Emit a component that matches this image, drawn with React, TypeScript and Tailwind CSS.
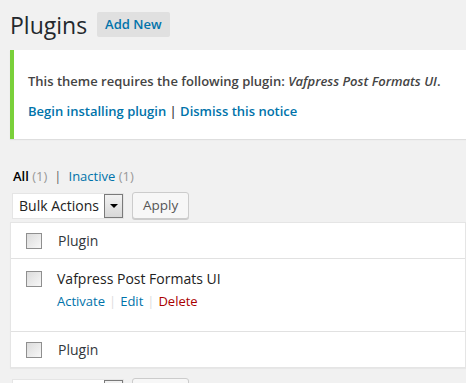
import React from "react";

const Checkbox = () => (
  <span className="block w-[16px] h-[16px] border border-[#8f8f8f] bg-gradient-to-br from-[#dcdcdc] to-[#f7f7f7]" />
);

const BulkActions = () => (
  <div className="flex items-center gap-[8px]">
    <div className="flex items-center w-[112px] h-[26px] bg-white border border-[#e5e5e5] pl-[6px]">
      <span className="text-[14px] text-[#222] flex-1">Bulk Actions</span>
      <span className="flex items-center justify-center w-[19px] h-[24px] border border-[#7a7a7a] bg-gradient-to-b from-[#f2f2f2] to-[#d8d8d8]">
        <span className="block w-0 h-0 border-l-[4px] border-r-[4px] border-t-[4px] border-l-transparent border-r-transparent border-t-black" />
      </span>
    </div>
    <button className="h-[27px] px-[10px] border border-[#ccc] bg-[#f7f7f7] text-[13.5px] text-[#555] rounded-[3px] shadow-[0_1px_0_#ccc]">
      Apply
    </button>
  </div>
);

export default function App() {
  return (
    <div
      className="w-[466px] h-[383px] overflow-hidden bg-[#f1f1f1] pl-[10px] text-[#444]"
      style={{ fontFamily: '"Open Sans", sans-serif' }}
    >
      {/* Title */}
      <div className="flex items-center pt-[8px] h-[42px]">
        <h1 className="text-[23px] leading-[29px] text-[#23282d]">Plugins</h1>
        <span className="ml-[10px] -mt-[1px] px-[8px] h-[25px] flex items-center bg-[#e0e0e0] rounded-[2px] text-[13px] font-semibold text-[#0073aa]">
          Add New
        </span>
      </div>

      {/* Notice */}
      <div className="mt-[8px] h-[89px] bg-white border-l-[4px] border-[#7ad03a] shadow-[0_1px_1px_rgba(0,0,0,0.08)] pl-[14px] pt-[21px] text-[13px]">
        <p className="leading-[20px] text-[#444] font-semibold">
          This theme requires the following plugin: <em>Vafpress Post Formats UI</em>.
        </p>
        <p className="leading-[20px] mt-[10px] font-semibold text-[#0073aa]">
          Begin installing plugin <span className="text-[#444]">|</span> Dismiss this notice
        </p>
      </div>

      {/* Filters */}
      <div className="mt-[28px] pl-[3px] text-[13px] leading-[18px]">
        <span className="font-semibold text-black">All</span>{" "}
        <span className="text-[#999]">(1)</span>
        <span className="text-[#666] mx-[7px]">|</span>
        <span className="text-[#0073aa]">Inactive</span>{" "}
        <span className="text-[#999]">(1)</span>
      </div>

      <div className="mt-[7px] ml-[2px]">
        <BulkActions />
      </div>

      {/* Table */}
      <div className="mt-[3px] bg-white border border-[#e5e5e5] shadow-[0_1px_1px_rgba(0,0,0,0.04)] text-[14px]">
        <div className="flex items-center h-[36px] border-b border-[#e1e1e1] pl-[15px]">
          <Checkbox />
          <span className="ml-[16px] text-[#32373c]">Plugin</span>
        </div>
        <div className="flex items-start h-[73px] border-b border-[#e1e1e1] pl-[15px] pt-[12px]">
          <Checkbox />
          <div className="ml-[15px] -mt-[2px]">
            <div className="text-[#222] leading-[20px]">Vafpress Post Formats UI</div>
            <div className="mt-[2px] leading-[20px] text-[13px]">
              <span className="text-[#0073aa]">Activate</span>
              <span className="text-[#ddd] mx-[4px]">|</span>
              <span className="text-[#0073aa]">Edit</span>
              <span className="text-[#ddd] mx-[4px]">|</span>
              <span className="text-[#a00]">Delete</span>
            </div>
          </div>
        </div>
        <div className="flex items-center h-[35px] pl-[15px]">
          <Checkbox />
          <span className="ml-[16px] text-[#32373c]">Plugin</span>
        </div>
      </div>

      <div className="mt-[10px] ml-[2px]">
        <BulkActions />
      </div>
    </div>
  );
}
